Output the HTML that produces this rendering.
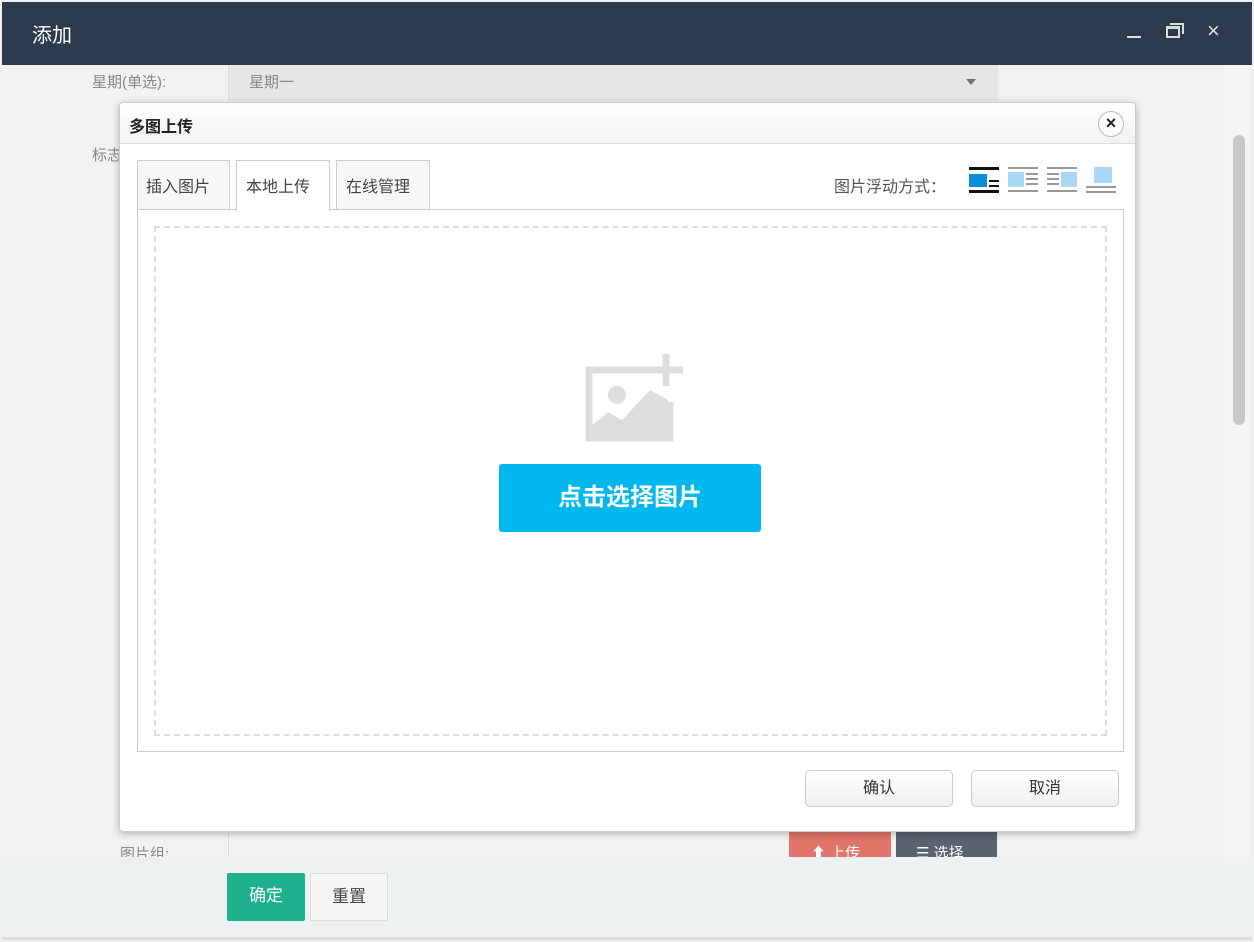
<!DOCTYPE html>
<html><head><meta charset="utf-8"><style>
*{box-sizing:border-box;margin:0;padding:0}
body{width:1254px;height:942px;overflow:hidden;background:#fff;font-family:"Liberation Sans","Noto Sans CJK SC",sans-serif;position:relative}
.abs{position:absolute}
</style></head><body>
<div class="abs" style="left:0;top:0;width:1254px;height:942px;background:#f0f0f0"></div>
<div class="abs" style="left:2px;top:2px;width:1250px;height:63px;background:#2c3a4e"></div>
<div class="abs" style="left:32px;top:19px;color:#fff;font-size:20px">添加</div>
<div class="abs" style="left:1127px;top:36px;width:14px;height:2px;background:#ddd"></div>
<div class="abs" style="left:1170px;top:23px;width:14px;height:11px;border:2px solid #ddd;border-bottom:none;border-left:none"></div>
<div class="abs" style="left:1166px;top:26px;width:14px;height:12px;border:2px solid #ddd;border-top-width:3px;background:#2c3a4e"></div>
<div class="abs" style="left:1207px;top:18px;color:#ddd;font-size:22px">×</div>
<div class="abs" style="left:2px;top:65px;width:1226px;height:792px;background:#f2f2f2"></div>
<div class="abs" style="left:1228px;top:65px;width:22px;height:792px;background:#f4f4f4"></div>
<div class="abs" style="left:1233px;top:135px;width:12px;height:290px;background:#c8c8c8;border-radius:6px"></div>
<div class="abs" style="left:228px;top:65px;width:770px;height:36px;background:#e6e6e6;border-left:1px solid #ddd"></div>
<div class="abs" style="left:92px;top:71px;color:#888;font-size:15px">星期(单选):</div>
<div class="abs" style="left:249px;top:71px;color:#888;font-size:15px">星期一</div>
<div class="abs" style="left:966px;top:79px;border:5px solid transparent;border-top:6px solid #777"></div>
<div class="abs" style="left:92px;top:144px;color:#888;font-size:15px">标志</div>
<div class="abs" style="left:228px;top:830px;width:1px;height:30px;background:#ddd"></div>
<div class="abs" style="left:120px;top:843px;color:#888;font-size:15px">图片组:</div>
<div class="abs" style="left:789px;top:832px;width:102px;height:26px;background:#e0766a;color:#fff;font-size:15px;padding:10px 0 0 22px">⬆ 上传</div>
<div class="abs" style="left:896px;top:832px;width:101px;height:26px;background:#5a6270;color:#fff;font-size:15px;padding:10px 0 0 20px">☰ 选择</div>
<div class="abs" style="left:2px;top:857px;width:1250px;height:80px;background:#edf1f1"></div>
<div class="abs" style="left:2px;top:937px;width:1250px;height:3px;background:#ddd"></div>
<div class="abs" style="left:227px;top:873px;width:78px;height:48px;background:#1fb18e;color:#fff;font-size:17px;text-align:center;line-height:46px;border-radius:2px">确定</div>
<div class="abs" style="left:310px;top:873px;width:78px;height:48px;background:#f5f5f5;border:1px solid #ddd;color:#444;font-size:17px;text-align:center;line-height:46px;border-radius:2px">重置</div>
<div class="abs" style="left:119px;top:102px;width:1017px;height:730px;background:#fff;border:1px solid #ccc;border-radius:4px;box-shadow:0 2px 8px rgba(0,0,0,.25)"></div>
<div class="abs" style="left:120px;top:103px;width:1015px;height:41px;background:linear-gradient(#fff,#f2f2f2);border-bottom:1px solid #ddd;border-radius:4px 4px 0 0"></div>
<div class="abs" style="left:129px;top:113px;font-size:16px;font-weight:bold;color:#222">多图上传</div>
<div class="abs" style="left:1098px;top:111px;width:26px;height:26px;border-radius:50%;border:1px solid #bbb;background:#fafafa;text-align:center;line-height:22px;font-size:18px;font-weight:bold;color:#222">×</div>
<div class="abs" style="left:137px;top:160px;width:93px;height:50px;border:1px solid #ccc;background:#f7f7f7"></div>
<div class="abs" style="left:146px;top:173px;font-size:16px;color:#444">插入图片</div>
<div class="abs" style="left:236px;top:160px;width:94px;height:51px;border:1px solid #ccc;border-bottom:none;background:#fff;z-index:2"></div>
<div class="abs" style="left:246px;top:173px;font-size:16px;color:#444;z-index:3">本地上传</div>
<div class="abs" style="left:336px;top:160px;width:94px;height:50px;border:1px solid #ccc;background:#f7f7f7"></div>
<div class="abs" style="left:346px;top:173px;font-size:16px;color:#444">在线管理</div>
<div class="abs" style="left:834px;top:173px;font-size:16px;color:#555">图片浮动方式：</div>
<svg class="abs" style="left:968px;top:166px" width="150" height="30">
<g><rect x="1" y="1" width="30" height="3" fill="#111"/><rect x="1" y="8" width="18" height="13" fill="#0a8ed9"/><rect x="21" y="14" width="10" height="2" fill="#111"/><rect x="21" y="19" width="10" height="2" fill="#111"/><rect x="1" y="24" width="30" height="3" fill="#111"/></g>
<g fill="#999"><rect x="40" y="1" width="30" height="2"/><rect x="40" y="6" width="16" height="15" fill="#a8d8f5"/><rect x="58" y="7" width="12" height="2"/><rect x="58" y="12" width="12" height="2"/><rect x="58" y="17" width="12" height="2"/><rect x="40" y="24" width="30" height="2"/></g>
<g fill="#999"><rect x="79" y="1" width="30" height="2"/><rect x="93" y="6" width="16" height="15" fill="#a8d8f5"/><rect x="79" y="7" width="12" height="2"/><rect x="79" y="12" width="12" height="2"/><rect x="79" y="17" width="12" height="2"/><rect x="79" y="24" width="30" height="2"/></g>
<g fill="#999"><rect x="126" y="1" width="18" height="16" fill="#a8d8f5"/><rect x="118" y="20" width="30" height="2"/><rect x="118" y="25" width="30" height="2"/></g>
</svg>
<div class="abs" style="left:137px;top:209px;width:987px;height:543px;border:1px solid #ccc"></div>
<div class="abs" style="left:154px;top:226px;width:953px;height:510px;border:2px dashed #ddd"></div>
<svg class="abs" style="left:580px;top:350px" width="110" height="95">
<path d="M85 20H9v68h81V52" fill="none" stroke="#ddd" stroke-width="7"/>
<circle cx="37" cy="45" r="9" fill="#ddd"/>
<path d="M9 78L28 62 42 70 70 40 88 50V88H9Z" fill="#ddd"/>
<path d="M86 4v32M70 20h33" stroke="#ddd" stroke-width="7"/>
</svg>
<div class="abs" style="left:499px;top:464px;width:262px;height:68px;background:#00b7ee;color:#fff;font-size:24px;font-weight:bold;text-align:center;line-height:68px;border-radius:3px">点击选择图片</div>
<div class="abs" style="left:805px;top:770px;width:148px;height:37px;border:1px solid #ccc;border-radius:5px;background:linear-gradient(#fff,#f0f0f0);text-align:center;line-height:35px;font-size:16px;color:#333">确认</div>
<div class="abs" style="left:971px;top:770px;width:148px;height:37px;border:1px solid #ccc;border-radius:5px;background:linear-gradient(#fff,#f0f0f0);text-align:center;line-height:35px;font-size:16px;color:#333">取消</div>
</body></html>
